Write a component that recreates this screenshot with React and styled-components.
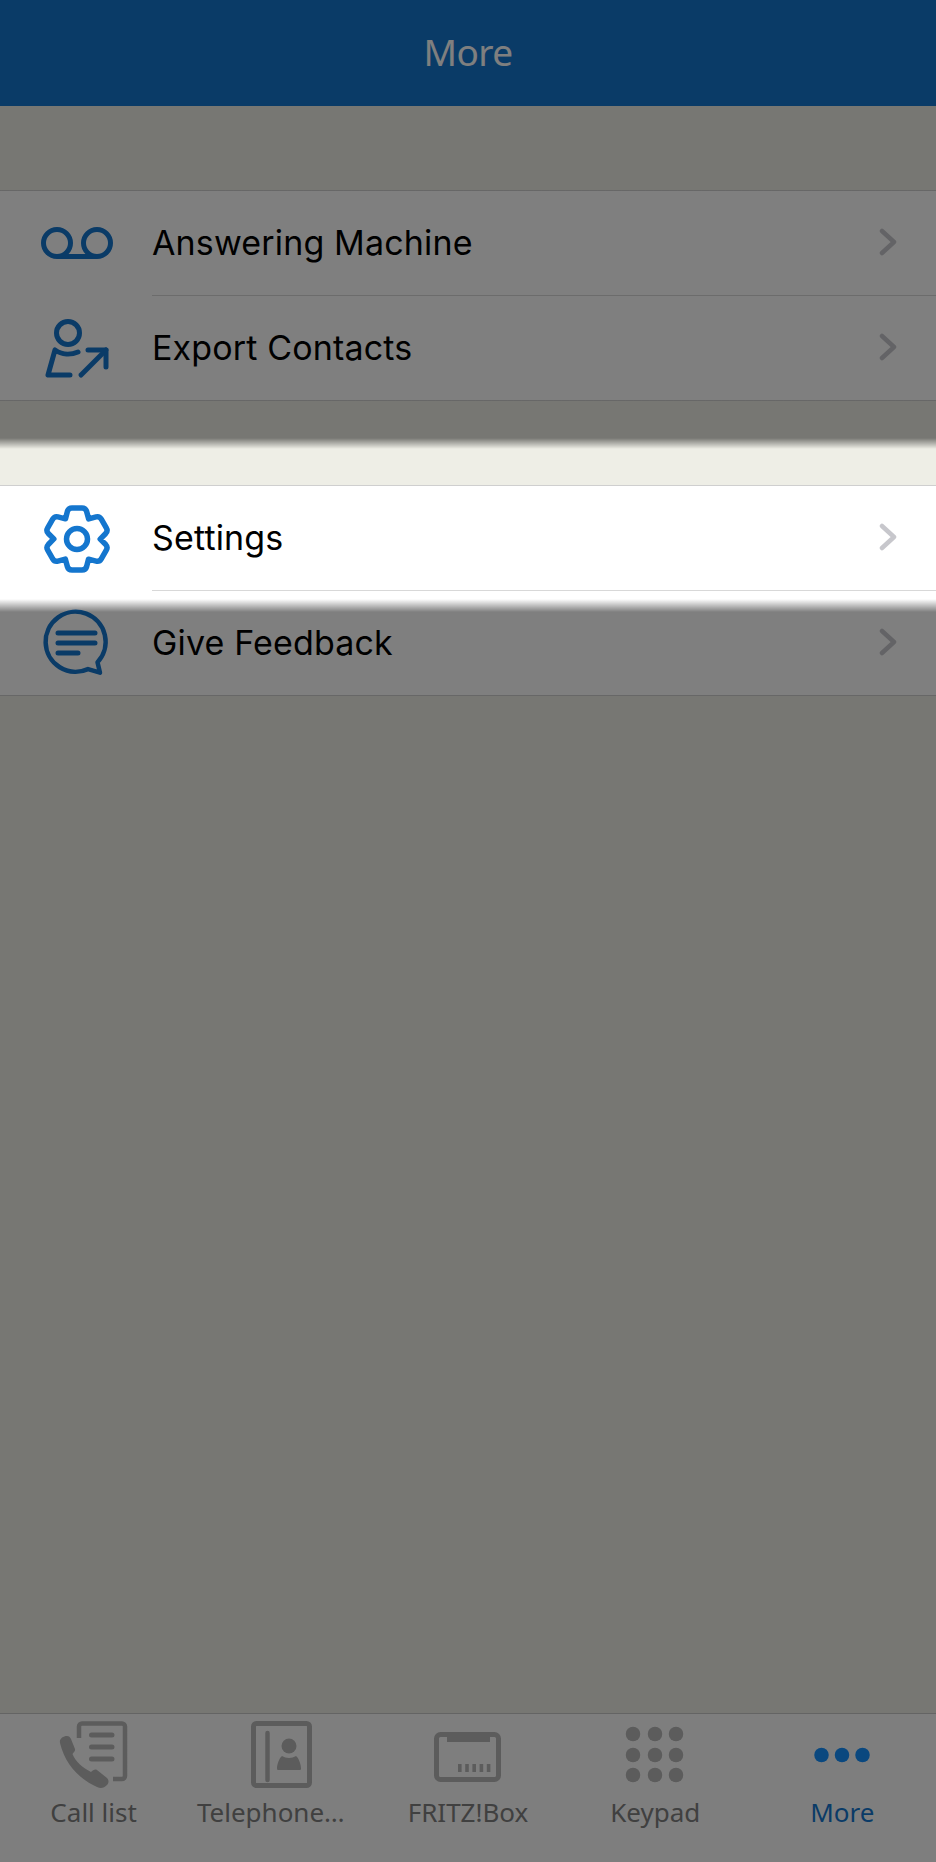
import { createGlobalStyle, styled } from "styled-components";

const GlobalStyle = createGlobalStyle`
  html, body {
    margin: 0;
    padding: 0;
    background: #eeeee6;
  }
`;

// one tooth of the gear, rotated six times around the centre
const gearPath = () => {
  const rot = (x, y, a) => {
    const px = x * Math.cos(a) - y * Math.sin(a) + 36;
    const py = x * Math.sin(a) + y * Math.cos(a) + 36;
    return `${px.toFixed(1)} ${py.toFixed(1)}`;
  };
  let d = "";
  for (let i = 0; i < 6; i++) {
    const a = (i * Math.PI) / 3;
    d += `${i ? "L" : "M"}${rot(-11.5, -20.2, a)}`;
    d += `L${rot(-9.6, -27.6, a)}Q${rot(-8.6, -31, a)} ${rot(-5, -31, a)}`;
    d += `L${rot(5, -31, a)}Q${rot(8.6, -31, a)} ${rot(9.6, -27.6, a)}`;
  }
  return `${d}Z`;
};

const VoicemailIcon = () => (
  <svg width="72" height="34" viewBox="0 0 72 34" fill="none" stroke="currentColor" strokeWidth="5">
    <circle cx="16" cy="16" r="13.5" />
    <circle cx="56" cy="16" r="13.5" />
    <path d="M16 29.500H56" />
  </svg>
);

const ExportIcon = () => (
  <svg width="72" height="72" viewBox="0 0 72 72" fill="none" stroke="currentColor" strokeWidth="5" strokeLinecap="round" strokeLinejoin="round">
    <circle cx="27" cy="21" r="11.500" />
    <path d="M37 40C30 43 21 43 14 38L7 63H29" />
    <path d="M40 63L65 38" />
    <path d="M47 38H65V55" />
  </svg>
);

const GearIcon = () => (
  <svg width="72" height="72" viewBox="0 0 72 72" fill="none" stroke="currentColor" strokeWidth="5.500" strokeLinejoin="round">
    <path d={gearPath()} />
    <circle cx="36" cy="36" r="10.500" />
  </svg>
);

const FeedbackIcon = () => (
  <svg width="72" height="72" viewBox="0 0 72 72" fill="none" stroke="currentColor" strokeWidth="4.500" strokeLinecap="round" strokeLinejoin="round">
    <path d="M56.500 55.300L59 65.700L47 62.100A30 30 0 1 1 56.500 55.300Z" />
    <path d="M17 26H54M17 36H54M17 46H37" strokeWidth="5" />
  </svg>
);

const Chevron = () => (
  <svg width="18" height="28" viewBox="0 0 18 28" fill="none" stroke="currentColor" strokeWidth="4.500" strokeLinecap="round" strokeLinejoin="round">
    <path d="M3 3L15 14L3 25" />
  </svg>
);

const CallListIcon = () => (
  <svg width="80" height="70" viewBox="0 0 80 70" fill="none" stroke="currentColor">
    <path d="M25 19V7.500A3 3 0 0 1 28 4.500H68A3 3 0 0 1 71 7.500V57A3 3 0 0 1 68 60H59" strokeWidth="4.500" />
    <path d="M37.500 16H58M37.500 28H58M37.500 40H58" strokeWidth="5" strokeLinecap="round" />
    <path
      d="M6 24C5 20 9 17 13 17C15 17 16 18 17 20L21 30C21.500 32 20 33 18.500 35C21 42 29 49 37 53C39 51 41 50 43 51L53 59C55 61 55 64 53 66C50 69 47 70 43 68C25 60 11 45 6 24Z"
      fill="currentColor"
      stroke="none"
    />
  </svg>
);

const ContactsIcon = () => (
  <svg width="80" height="70" viewBox="0 0 80 70" fill="none" stroke="currentColor">
    <rect x="12.500" y="4.500" width="56" height="62" rx="3" strokeWidth="5" />
    <path d="M26.500 14V61" strokeWidth="4.500" strokeLinecap="round" />
    <circle cx="48" cy="27" r="7.500" fill="currentColor" stroke="none" />
    <path
      d="M41 37C45 39.500 51 39.500 55 37C58 39 60 46 60 49.500C60 50.500 59.500 51 58.500 51H37.500C36.500 51 36 50.500 36 49.500C36 46 38 39 41 37Z"
      fill="currentColor"
      stroke="none"
    />
  </svg>
);

const FritzIcon = () => (
  <svg width="80" height="70" viewBox="0 0 80 70" fill="none" stroke="currentColor">
    <rect x="8.500" y="15.500" width="62" height="45" rx="4" strokeWidth="5" />
    <path d="M19 14H62V23H19Z" fill="currentColor" stroke="none" />
    <path d="M30 45H33.600V53H30ZM37.200 45H40.800V53H37.200ZM44.400 45H48V53H44.400ZM51.600 45H55.200V53H51.600ZM58.800 45H62.400V53H58.800Z" fill="currentColor" stroke="none" />
  </svg>
);

const KeypadIcon = () => (
  <svg width="80" height="70" viewBox="0 0 80 70" fill="currentColor">
    {[15, 36, 56].map((cy) =>
      [18, 40, 61].map((cx) => <circle key={`${cx}-${cy}`} cx={cx} cy={cy} r="7.250" />),
    )}
  </svg>
);

const MoreIcon = () => (
  <svg width="80" height="70" viewBox="0 0 80 70" fill="currentColor">
    {[19.500, 40, 60.500].map((cx) => (
      <circle key={cx} cx={cx} cy="36" r="7.250" />
    ))}
  </svg>
);

const groups = [
  [
    { label: "Answering Machine", Icon: VoicemailIcon },
    { label: "Export Contacts", Icon: ExportIcon },
  ],
  [
    { label: "Settings", Icon: GearIcon },
    { label: "Give Feedback", Icon: FeedbackIcon },
  ],
];

const tabs = [
  { label: "Call list", Icon: CallListIcon },
  { label: "Telephone…", Icon: ContactsIcon, shift: 20 },
  { label: "FRITZ!Box", Icon: FritzIcon },
  { label: "Keypad", Icon: KeypadIcon },
  { label: "More", Icon: MoreIcon, active: true },
];

function App() {
  return (
    <Page>
      <GlobalStyle />
      <Header>More</Header>
      <Content>
        {groups.map((rows) => (
          <Group key={rows[0].label}>
            {rows.map(({ label, Icon }, i) => (
              <Row key={label}>
                <IconSlot>
                  <Icon />
                </IconSlot>
                <RowBody $last={i === rows.length - 1}>
                  <RowLabel>{label}</RowLabel>
                  <ChevronSlot>
                    <Chevron />
                  </ChevronSlot>
                </RowBody>
              </Row>
            ))}
          </Group>
        ))}
      </Content>
      <TabBar>
        {tabs.map(({ label, Icon, active, shift }) => (
          <Tab key={label} $active={active}>
            <TabIcon $active={active}>
              <Icon />
            </TabIcon>
            <TabLabel $shift={shift}>{label}</TabLabel>
          </Tab>
        ))}
      </TabBar>
      <Dimmer />
    </Page>
  );
}

const Page = styled.div`
  position: relative;
  display: flex;
  flex-direction: column;
  width: 936px;
  height: 1862px;
  overflow: hidden;
  background: #eeeee6;
  font-family: "Inter", "Liberation Sans", sans-serif;
`;

const Header = styled.header`
  flex: none;
  height: 106px;
  display: flex;
  align-items: center;
  justify-content: center;
  box-sizing: border-box;
  padding-bottom: 3px;
  background: #1476ce;
  color: #fff;
  font-family: "Noto Sans", sans-serif;
  font-size: 37px;
  letter-spacing: -0.6px;
`;

const Content = styled.main`
  flex: 1;
  display: flex;
  flex-direction: column;
  gap: 84px;
  padding-top: 84px;
`;

const Group = styled.section`
  background: #fff;
  border-top: 1px solid #cfcfcf;
  border-bottom: 1px solid #cfcfcf;
`;

const Row = styled.div`
  display: flex;
  height: 105px;

  &:last-child {
    height: 104px;
  }
`;

const IconSlot = styled.div`
  flex: none;
  width: 152px;
  display: flex;
  align-items: center;
  justify-content: center;
  color: #1476ce;

  svg {
    margin-right: -2px;
  }
`;

const RowBody = styled.div`
  flex: 1;
  display: flex;
  align-items: center;
  justify-content: space-between;
  border-bottom: ${(p) => (p.$last ? "none" : "1px solid #d8d8d8")};
`;

const RowLabel = styled.span`
  padding-bottom: 2px;
  font-size: 34px;
  letter-spacing: 0.15px;
  color: #000;
`;

const ChevronSlot = styled.span`
  display: flex;
  margin-right: 39px;
  margin-bottom: 2px;
  color: #c7c7cc;
`;

const TabBar = styled.nav`
  flex: none;
  height: 149px;
  box-sizing: border-box;
  display: grid;
  grid-template-columns: repeat(5, 1fr);
  background: #fdfdfd;
  border-top: 1px solid #c8c8c8;
`;

const Tab = styled.div`
  display: flex;
  flex-direction: column;
  align-items: center;
  padding-top: 5px;
  color: ${(p) => (p.$active ? "#1476ce" : "#808080")};
`;

const TabIcon = styled.div`
  height: 70px;
  display: flex;
  color: ${(p) => (p.$active ? "#1490ff" : "#b8b8b8")};
`;

const TabLabel = styled.span`
  margin-top: 5px;
  margin-right: ${(p) => p.$shift || 0}px;
  font-family: "Noto Sans", sans-serif;
  font-size: 26px;
`;

/* dims the whole screen except for the band around the Settings row */
const Dimmer = styled.div`
  position: absolute;
  inset: 0;
  pointer-events: none;
  background: linear-gradient(
    to bottom,
    rgba(0, 0, 0, 0.5) 0,
    rgba(0, 0, 0, 0.5) 438px,
    rgba(0, 0, 0, 0) 449px,
    rgba(0, 0, 0, 0) 599px,
    rgba(0, 0, 0, 0.5) 612px,
    rgba(0, 0, 0, 0.5) 100%
  );
`;

export default App;
